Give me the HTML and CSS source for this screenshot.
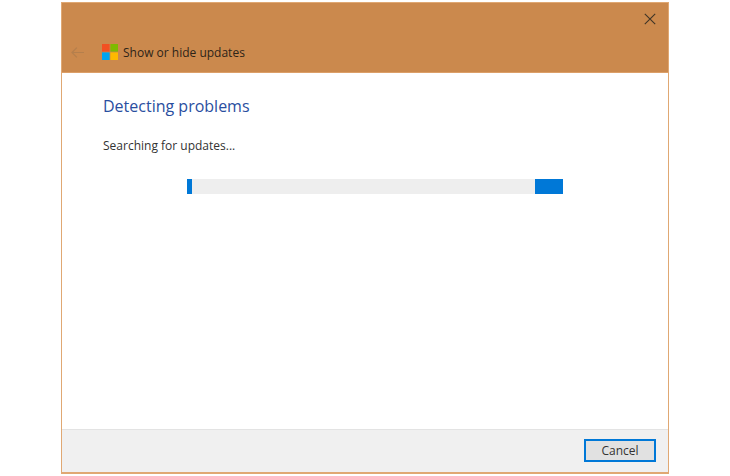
FILE: index.html
```html
<!DOCTYPE html>
<html lang="en">
<head>
<meta charset="utf-8">
<title>Show or hide updates</title>
<link rel="stylesheet" href="styles.css">
</head>
<body>
<div class="window">
  <header class="header">
    <div class="close-row">
      <svg class="close" width="12" height="12" viewBox="0 0 12 12"><path d="M.8.8l10.4 10.4M11.2.8L.8 11.2" stroke="#3f3527" stroke-width="1.1" fill="none"/></svg>
    </div>
    <div class="title-row">
      <svg class="back" width="13" height="11" viewBox="0 0 13 11"><path d="M13 5.5H1M5.8.7L1 5.5l4.8 4.8" stroke="#b57f4c" stroke-width="1.2" fill="none"/></svg>
      <svg class="logo" width="16" height="16" viewBox="0 0 16 16">
        <rect width="7.6" height="7.6" fill="#f25022"/>
        <rect x="8.4" width="7.6" height="7.6" fill="#7fba00"/>
        <rect y="8.4" width="7.6" height="7.6" fill="#00a4ef"/>
        <rect x="8.4" y="8.4" width="7.6" height="7.6" fill="#ffb900"/>
      </svg>
      <span class="title">Show or hide updates</span>
    </div>
  </header>
  <main class="content">
    <h1 class="heading">Detecting problems</h1>
    <p class="status">Searching for updates...</p>
    <div class="progress">
      <div class="chunk-start"></div>
      <div class="chunk-end"></div>
    </div>
  </main>
  <footer class="footer">
    <button class="cancel">Cancel</button>
  </footer>
</div>
</body>
</html>
```
FILE: styles.css
```css
html, body {
  margin: 0;
  height: 100%;
  background: #fff;
}
body {
  padding: 2px 61px 0 61px;
  box-sizing: border-box;
  height: 476px;
  overflow: hidden;
  font-family: "Open Sans", "Noto Sans", sans-serif;
}
.window {
  width: 608px;
  height: 472px;
  box-sizing: border-box;
  border: 1px solid #e0a873;
  border-bottom-width: 2px;
  display: flex;
  flex-direction: column;
  background: #fff;
}
.header {
  height: 69px;
  background: #cb894d;
  border-bottom: 1px solid #dc9f68;
  flex: none;
  display: flex;
  flex-direction: column;
}
.close-row {
  display: flex;
  justify-content: flex-end;
  padding: 10px 12px 0 0;
  height: 12px;
}
.close { display: block; }
.title-row {
  display: flex;
  align-items: center;
  margin-top: 17px;
  padding-left: 9px;
}
.back { margin-right: 18px; }
.logo { margin-right: 5px; }
.title {
  font-size: 12px;
  color: #2e2418;
  line-height: 18px;
  padding-top: 2px;
}
.content {
  flex: 1;
  padding: 0 0 0 41px;
  min-height: 0;
}
.heading {
  margin: 22px 0 0;
  font-size: 16px;
  font-weight: 400;
  line-height: 22px;
  color: #2a4ea0;
}
.status {
  margin: 20px 0 0;
  font-size: 12px;
  line-height: 18px;
  color: #333;
}
.progress {
  display: flex;
  justify-content: space-between;
  width: 376px;
  height: 15px;
  margin: 24px 0 0 84px;
  background: #eee;
}
.chunk-start { width: 5px; background: #0078d7; }
.chunk-end { width: 28px; background: #0078d7; }
.footer {
  flex: none;
  height: 43px;
  box-sizing: border-box;
  background: #f0f0f0;
  border-top: 1px solid #e3e3e3;
  display: flex;
  justify-content: flex-end;
  align-items: flex-start;
  padding: 9px 12px 0 0;
}
.cancel {
  width: 72px;
  height: 23px;
  padding: 0;
  border: 2px solid #0078d7;
  background: #e1e1e1;
  font-family: inherit;
  font-size: 12px;
  color: #333;
}
```
